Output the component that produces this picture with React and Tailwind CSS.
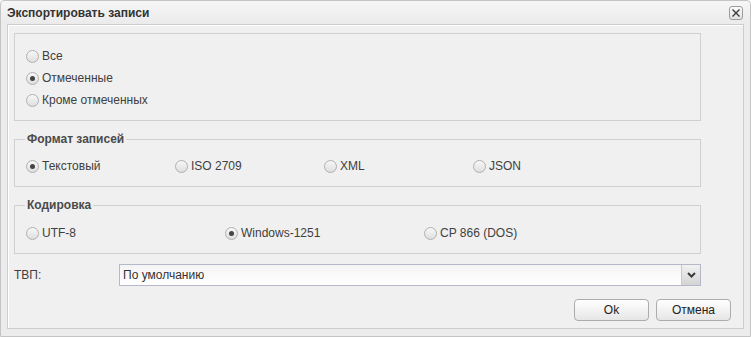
import React, { useState } from "react";

const Radio = ({ label, checked, onClick, className = "" }) => (
  <label onClick={onClick} className={"flex items-center gap-[3px] h-[22px] cursor-pointer " + className}>
    <span className="w-[13px] h-[13px] rounded-full border border-[#b0b0b0] bg-gradient-to-b from-[#f8f8f8] to-[#dedede] flex items-center justify-center shrink-0">
      {checked && <span className="w-[5px] h-[5px] rounded-full bg-[#444]" />}
    </span>
    <span className="text-[12px] text-[#404040] leading-none">{label}</span>
  </label>
);

const App = () => {
  const [scope, setScope] = useState("marked");
  const [format, setFormat] = useState("text");
  const [enc, setEnc] = useState("win");

  const formats = [
    { id: "text", label: "Текстовый" },
    { id: "iso", label: "ISO 2709" },
    { id: "xml", label: "XML" },
    { id: "json", label: "JSON" },
  ];

  const encodings = [
    { id: "utf", label: "UTF-8" },
    { id: "win", label: "Windows-1251" },
    { id: "dos", label: "CP 866 (DOS)" },
  ];

  return (
    <div className="w-[751px] h-[337px] bg-white font-['Liberation_Sans',Arial,sans-serif]">
      <div className="w-[751px] h-[337px] border border-[#c4c4c4] rounded-t-[4px] bg-[#ececec] flex flex-col px-[6px] pb-[7px]">
        {/* Header */}
        <div className="h-[23px] flex items-center justify-between bg-gradient-to-b from-[#f6f6f6] to-[#ebebeb] -mx-[6px] px-[6px] rounded-t-[4px]">
          <span className="text-[12px] font-bold text-[#333]">Экспортировать записи</span>
          <button className="w-[14px] h-[14px] mr-[1px] rounded-[3px] border border-[#9c9c9c] bg-gradient-to-b from-[#fafafa] to-[#e2e2e2] flex items-center justify-center">
            <svg width="10" height="10" viewBox="0 0 10 10">
              <path d="M1.5 1.5 L8.5 8.5 M8.5 1.5 L1.5 8.5" stroke="#3a3a3a" strokeWidth="1.4" />
            </svg>
          </button>
        </div>

        {/* Body */}
        <div className="flex-1 border border-[#cdcdcd] shadow-[inset_1px_1px_0_#ffffff] bg-[#f0f0f0] pt-[8px] px-[6px] flex flex-col">
          {/* Scope */}
          <div className="w-[687px] h-[88px] border border-[#d0d0d0] pt-[11px] pl-[11px]">
            <Radio label="Все" checked={scope === "all"} onClick={() => setScope("all")} />
            <Radio label="Отмеченные" checked={scope === "marked"} onClick={() => setScope("marked")} />
            <Radio label="Кроме отмеченных" checked={scope === "other"} onClick={() => setScope("other")} />
          </div>

          {/* Format */}
          <fieldset className="w-[687px] mt-[11px] border border-[#d0d0d0] pl-[11px] pt-[9px] pb-[9px]">
            <legend className="ml-[-1px] px-[2px] text-[12px] leading-[14px] font-bold text-[#4a4a4a]">Формат записей</legend>
            <div className="flex">
              {formats.map((f) => (
                <Radio key={f.id} className="w-[149px]" label={f.label} checked={format === f.id} onClick={() => setFormat(f.id)} />
              ))}
            </div>
          </fieldset>

          {/* Encoding */}
          <fieldset className="w-[687px] mt-[11px] border border-[#d0d0d0] pl-[11px] pt-[10px] pb-[9px]">
            <legend className="ml-[-1px] px-[2px] text-[12px] leading-[14px] font-bold text-[#4a4a4a]">Кодировка</legend>
            <div className="flex">
              {encodings.map((e) => (
                <Radio key={e.id} className="w-[199px]" label={e.label} checked={enc === e.id} onClick={() => setEnc(e.id)} />
              ))}
            </div>
          </fieldset>

          {/* TVP */}
          <div className="flex items-center mt-[10px] h-[22px]">
            <span className="w-[105px] text-[12px] text-[#404040]">ТВП:</span>
            <div className="w-[582px] h-[22px] flex border border-[#b5b8c8] bg-white">
              <div className="flex-1 flex items-center px-[3px] text-[12px] text-[#333] bg-gradient-to-b from-[#f4f4f4] to-[#ffffff]">По умолчанию</div>
              <div className="w-[19px] border-l border-[#c9c9d4] bg-gradient-to-b from-[#f2f2f2] to-[#d4d4d4] flex items-center justify-center">
                <svg width="9" height="6" viewBox="0 0 9 6">
                  <path d="M1 1 L4.5 4.5 L8 1" fill="none" stroke="#3a3a3a" strokeWidth="2" />
                </svg>
              </div>
            </div>
          </div>

          {/* Buttons */}
          <div className="flex justify-end gap-[7px] mt-[13px] pr-[6px]">
            <button className="w-[75px] h-[22px] rounded-[4px] border border-[#acacac] bg-gradient-to-b from-[#ffffff] to-[#e6e6e6] text-[12px] text-[#222]">Ok</button>
            <button className="w-[75px] h-[22px] rounded-[4px] border border-[#acacac] bg-gradient-to-b from-[#ffffff] to-[#e6e6e6] text-[12px] text-[#222]">Отмена</button>
          </div>
        </div>
      </div>
    </div>
  );
};

export default App;
